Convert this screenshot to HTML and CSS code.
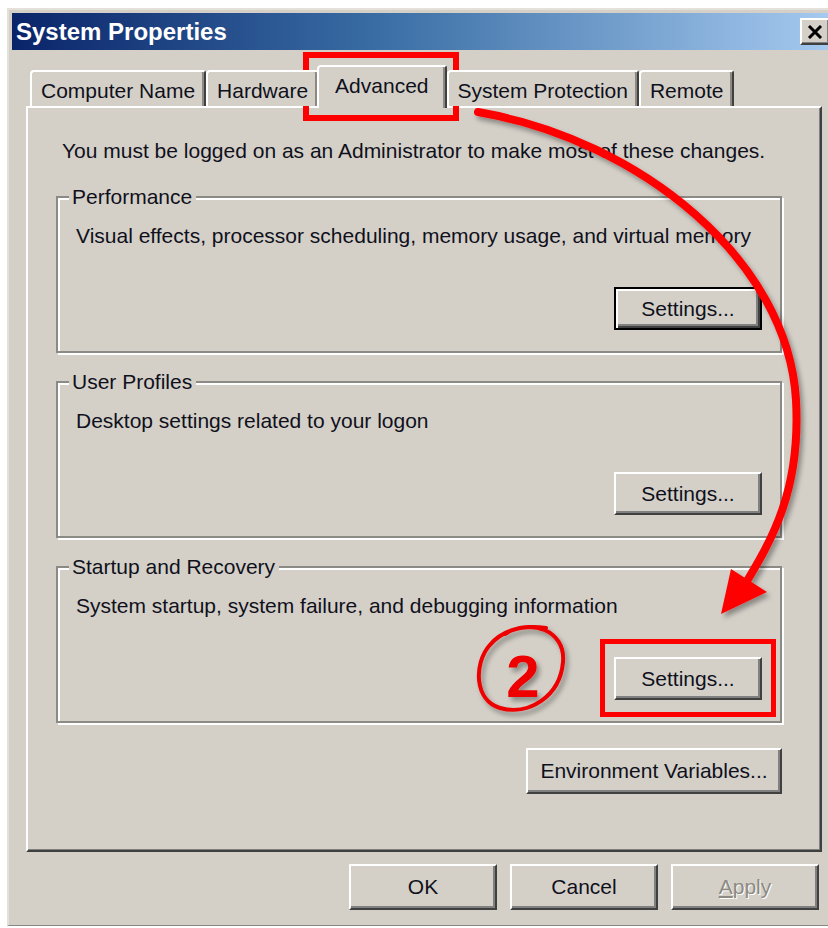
FILE: index.html
```html
<!DOCTYPE html>
<html lang="en">
<head>
<meta charset="utf-8">
<title>System Properties</title>
<link rel="stylesheet" href="styles.css">
</head>
<body>
<div class="window">
  <div class="titlebar">
    <span class="title">System Properties</span>
    <button class="close" aria-label="Close">
      <svg width="16" height="14" viewBox="0 0 16 14"><path d="M2 1 L14 13 M14 1 L2 13" stroke="#000" stroke-width="3" fill="none"/></svg>
    </button>
  </div>

  <div class="tabs">
    <div class="tab">Computer Name</div>
    <div class="tab">Hardware</div>
    <div class="tab active">Advanced</div>
    <div class="tab">System Protection</div>
    <div class="tab">Remote</div>
  </div>

  <div class="panel">
    <p class="intro">You must be logged on as an Administrator to make most of these changes.</p>

    <section class="group">
      <div class="group-title">Performance</div>
      <p class="group-desc">Visual effects, processor scheduling, memory usage, and virtual memory</p>
      <div class="group-actions"><button class="btn btn-default">Settings...</button></div>
    </section>

    <section class="group">
      <div class="group-title">User Profiles</div>
      <p class="group-desc">Desktop settings related to your logon</p>
      <div class="group-actions"><button class="btn">Settings...</button></div>
    </section>

    <section class="group">
      <div class="group-title">Startup and Recovery</div>
      <p class="group-desc">System startup, system failure, and debugging information</p>
      <div class="group-actions"><button class="btn">Settings...</button></div>
    </section>

    <div class="panel-actions"><button class="btn btn-wide">Environment Variables...</button></div>
  </div>

  <div class="dialog-actions">
    <button class="btn btn-dialog">OK</button>
    <button class="btn btn-dialog">Cancel</button>
    <button class="btn btn-dialog" disabled><u>A</u>pply</button>
  </div>
</div>

<svg class="markup" width="828" height="928" viewBox="0 0 828 928">
  <defs>
    <filter id="shade" x="-20%" y="-20%" width="140%" height="140%">
      <feDropShadow dx="3" dy="4" stdDeviation="2.5" flood-color="#000" flood-opacity="0.35"/>
    </filter>
  </defs>
  <rect x="306" y="55" width="150" height="63" fill="none" stroke="#ff0000" stroke-width="6"/>
  <rect x="602.5" y="641.5" width="171" height="73" fill="none" stroke="#ff0000" stroke-width="5"/>
  <g filter="url(#shade)">
    <path d="M478 112 C 640 140 788 260 796 400 C 801 490 772 540 744 586" fill="none" stroke="#ff0000" stroke-width="8" stroke-linecap="round"/>
    <polygon points="721,614 731,569 767,592" fill="#ff0000"/>
  </g>
  <g filter="url(#shade)">
    <path d="M505 634 C 530 618 566 630 563 662 C 560 697 528 716 500 708 C 474 700 474 664 489 646 C 500 632 520 624 546 628" fill="none" stroke="#ee0000" stroke-width="4" stroke-linecap="round"/>
    <text x="523" y="697" class="markup-num">2</text>
  </g>
</svg>
</body>
</html>
```

FILE: styles.css
```css
* {
  box-sizing: border-box;
}

body {
  margin: 0;
  background: #ffffff;
  position: relative;
  width: 828px;
  height: 928px;
  overflow: hidden;
  font-family: "Liberation Sans", Arial, sans-serif;
  font-size: 21px;
  line-height: 24px;
  color: #10101c;
}

p {
  margin: 0;
}

/* dialog frame */
.window {
  margin: 8px 0 0 7px;
  width: 828px;
  height: 918px;
  background: #d4d0c8;
  border-top: 2px solid #e4e1da;
  border-left: 2px solid #e4e1da;
  border-bottom: 1px solid #8a8782;
  padding: 3px 3px 0 3px;
}

.titlebar {
  height: 37px;
  display: flex;
  align-items: center;
  justify-content: space-between;
  padding: 0 2px 0 4px;
  background: linear-gradient(to right, #0a246a 0%, #3a6ea5 45%, #a6caf0 100%);
}

.title {
  color: #ffffff;
  font-weight: bold;
  font-size: 24px;
  line-height: 28px;
}

.close {
  width: 30px;
  height: 27px;
  padding: 0;
  display: flex;
  align-items: center;
  justify-content: center;
  background: #d4d0c8;
  border: 2px solid;
  border-color: #ffffff #404040 #404040 #ffffff;
  box-shadow: inset -1px -1px 0 #808080;
}

/* tab strip */
.tabs {
  display: flex;
  align-items: flex-end;
  height: 41px;
  margin-top: 15px;
  padding-left: 18px;
  position: relative;
  z-index: 1;
}

.tab {
  height: 36px;
  padding: 3px 9px 0 9px;
  display: flex;
  align-items: center;
  background: #d4d0c8;
  border-top: 2px solid #ffffff;
  border-left: 2px solid #ffffff;
  border-right: 2px solid #404040;
  border-top-left-radius: 4px;
  border-top-right-radius: 3px;
  box-shadow: inset -2px 0 0 #8c8983;
  white-space: nowrap;
}

.tab.active {
  height: 43px;
  margin: 0 0 -2px -2px;
  padding: 0 16px 4px 16px;
  position: relative;
  z-index: 2;
}

/* tab page */
.panel {
  margin: 0 10px 0 14px;
  height: 746px;
  border-top: 2px solid #ffffff;
  border-left: 2px solid #ffffff;
  border-right: 2px solid #404040;
  border-bottom: 2px solid #404040;
  box-shadow: inset -1px -1px 0 #808080;
  padding: 31px 38px 0 28px;
}

.intro {
  margin-left: 6px;
  white-space: nowrap;
}

.group {
  margin-top: 33px;
  border: 2px solid #8c8a85;
  box-shadow: inset 2px 2px 0 #ffffff, 2px 2px 0 #ffffff;
  padding: 0 18px 21px 18px;
}

.group + .group {
  margin-top: 28px;
}

.group-title {
  display: block;
  width: fit-content;
  margin: -13px 0 0 -7px;
  padding: 0 4px 0 3px;
  background: #d4d0c8;
}

.group-desc {
  margin-top: 15px;
  white-space: nowrap;
}

.group-actions {
  margin-top: 39px;
  display: flex;
  justify-content: flex-end;
}

.panel-actions {
  margin-top: 25px;
  display: flex;
  justify-content: flex-end;
}

/* push buttons */
.btn {
  font: inherit;
  color: #10101c;
  width: 148px;
  height: 43px;
  padding: 0;
  background: #d4d0c8;
  border: 2px solid;
  border-color: #ffffff #404040 #404040 #ffffff;
  box-shadow: inset -2px -2px 0 #808080;
}

.btn-default {
  border: 2px solid #000000;
  box-shadow: inset 2px 2px 0 #ffffff, inset -2px -2px 0 #404040, inset -4px -4px 0 #808080;
}

.btn-wide {
  width: 256px;
  height: 46px;
}

.btn-dialog {
  height: 46px;
}

.btn:disabled {
  color: #8d8a84;
  text-shadow: 1px 1px 0 #ffffff;
}

.dialog-actions {
  margin-top: 12px;
  display: flex;
  justify-content: flex-end;
  gap: 13px;
  padding-right: 13px;
}

/* red callouts drawn over the dialog */
.markup {
  position: absolute;
  top: 0;
  left: 0;
  pointer-events: none;
}

.markup-num {
  font-family: "Liberation Sans", Arial, sans-serif;
  font-weight: bold;
  font-size: 60px;
  fill: #ee0000;
  text-anchor: middle;
}
```
